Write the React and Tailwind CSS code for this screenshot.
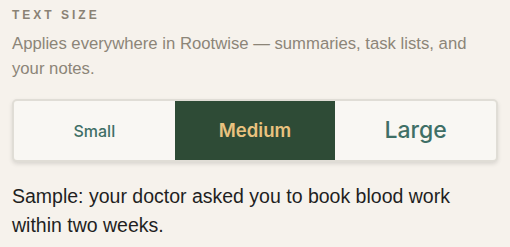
export default function App() {
  return (
    <div className="w-[510px] h-[247px] bg-[#f6f2ec] px-3 pt-[7px] overflow-hidden font-['Liberation_Sans',Arial,sans-serif]">
      <div className="text-[12px] leading-4 font-bold tracking-[3px] text-[#8a8275]">TEXT SIZE</div>
      <p className="mt-[8px] text-[16.7px] leading-[25px] text-[#8c8578]">
        Applies everywhere in Rootwise — summaries, task lists, and your notes.
      </p>
      <div className="mt-[18px] grid grid-cols-3 h-[63px] rounded-[5px] border-2 border-[#e0ddd6] bg-[#f9f7f3] shadow-[0_2px_4px_rgba(0,0,0,0.12)] overflow-hidden">
        <button className="flex items-center justify-center font-['Inter',sans-serif] text-[16px] font-medium text-[#3f6f66]">Small</button>
        <button className="flex items-center justify-center font-['Inter',sans-serif] bg-[#2e4b36] text-[18.5px] font-semibold text-[#e9c27f] -my-[2px]">Medium</button>
        <button className="flex items-center justify-center font-['Inter',sans-serif] text-[23px] font-medium text-[#3f6f66]">Large</button>
      </div>
      <p className="mt-[20px] text-[19.5px] leading-[29px] text-[#1f1f1f]">
        Sample: your doctor asked you to book blood work within two weeks.
      </p>
    </div>
  );
}
